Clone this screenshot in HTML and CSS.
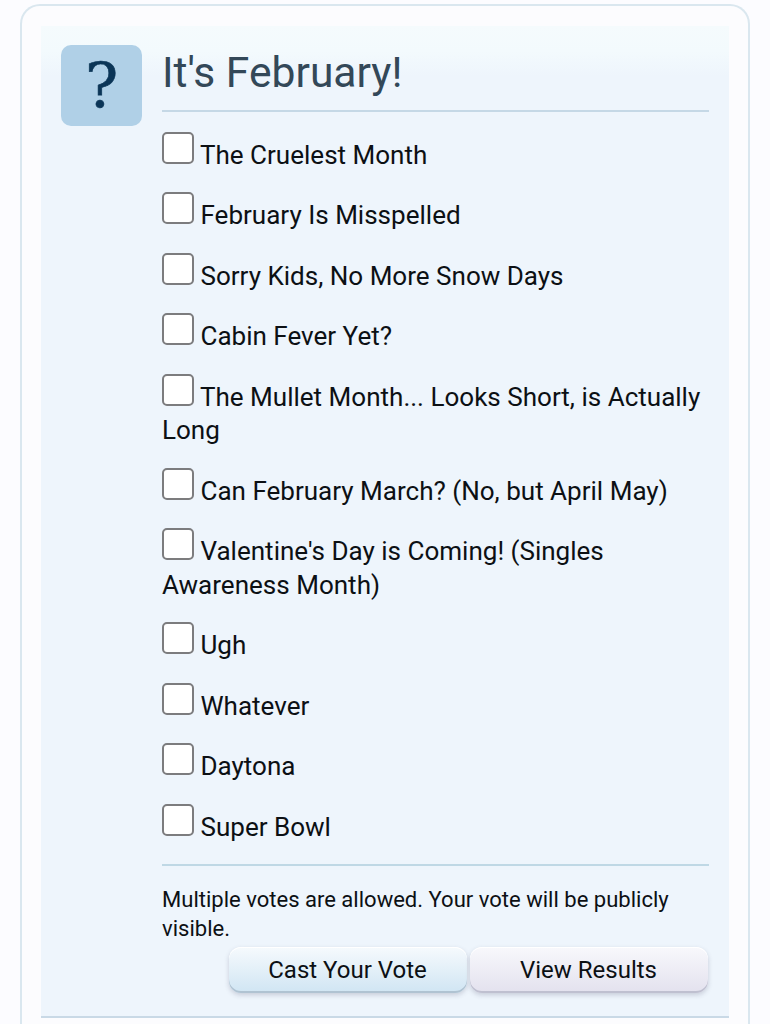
FILE: index.html
```
<!DOCTYPE html>
<html lang="en">
<head>
    <meta charset="UTF-8">
    <meta name="viewport" content="width=device-width, initial-scale=1.0">
    <title>It's February!</title>
    <link rel="stylesheet" href="styles.css">
</head>
<body>

<div class="container">
    <form class="poll" action="#">
        <div class="poll-icon"><span>?</span></div>
        <div class="poll-body">
            <h2>It's February!</h2>
            <ul class="poll-options">
                <li><label><input type="checkbox"> The Cruelest Month</label></li>
                <li><label><input type="checkbox"> February Is Misspelled</label></li>
                <li><label><input type="checkbox"> Sorry Kids, No More Snow Days</label></li>
                <li><label><input type="checkbox"> Cabin Fever Yet?</label></li>
                <li><label><input type="checkbox"> The Mullet Month... Looks Short, is Actually Long</label></li>
                <li><label><input type="checkbox"> Can February March? (No, but April May)</label></li>
                <li><label><input type="checkbox"> Valentine's Day is Coming! (Singles Awareness Month)</label></li>
                <li><label><input type="checkbox"> Ugh</label></li>
                <li><label><input type="checkbox"> Whatever</label></li>
                <li><label><input type="checkbox"> Daytona</label></li>
                <li><label><input type="checkbox"> Super Bowl</label></li>
            </ul>
            <div class="poll-footer">
                <p>Multiple votes are allowed. Your vote will be publicly visible.</p>
                <div class="poll-buttons">
                    <button type="submit" class="primary">Cast Your Vote</button>
                    <button type="button">View Results</button>
                </div>
            </div>
        </div>
    </form>
</div>

</body>
</html>
```
FILE: styles.css
```
* {
    box-sizing: border-box;
}

body {
    font-family: Roboto, "Liberation Sans", sans-serif;
    background-color: #fcfcff;
    color: #0c1014;
    margin: 0;
    padding: 4px 20px 0;
    height: 1024px;
    overflow: hidden;
}

.container {
    height: 1020px;
    padding: 20px 19px 0;
    border: 2px solid #dae7ef;
    border-bottom: none;
    border-radius: 20px 20px 0 0;
    background-color: #fcfcfe;
}

.poll {
    display: flex;
    gap: 20px;
    height: 992px;
    padding: 19px 20px 0;
    background: linear-gradient(#f5fbfd 0, #f3fafd 25px, #eef5fc 50px, #eef5fc);
    border-bottom: 2px solid #c9d9e6;
}

.poll-icon {
    flex: none;
    display: flex;
    justify-content: center;
    width: 81px;
    height: 81px;
    border-radius: 10px;
    background-color: #b0d0e7;
    color: #0b3557;
    font-family: "DejaVu Serif", serif;
    font-size: 62px;
    line-height: 81px;
    -webkit-text-stroke: 0.6px #0b3557;
}

.poll-body {
    flex: 1;
    min-width: 0;
}

h2 {
    height: 67px;
    margin: 0;
    border-bottom: 2px solid #c5d8e6;
    color: #334858;
    font-size: 42.6px;
    font-weight: normal;
    line-height: 55px;
}

.poll-options {
    margin: 0;
    padding: 19.6px 0 0;
    list-style: none;
    font-size: 26.04px;
    line-height: 33.4px;
}

.poll-options li {
    margin-bottom: 20.15px;
}

.poll-options li:last-child {
    margin-bottom: 0;
    padding-bottom: 20px;
}

input[type="checkbox"] {
    appearance: none;
    width: 32px;
    height: 32px;
    margin: 0;
    border: 2px solid #7c7c7e;
    border-radius: 5px;
    background-color: #fff;
    vertical-align: baseline;
}

.poll-footer {
    padding-top: 20px;
    border-top: 2px solid #bfd8e5;
}

.poll-footer p {
    margin: 0;
    font-size: 22.04px;
    line-height: 28.5px;
}

.poll-buttons {
    display: flex;
    justify-content: flex-end;
    gap: 3px;
    margin: 4px 1.5px 0 0;
}

button {
    width: 238px;
    height: 46px;
    padding: 0;
    border: none;
    border-radius: 12px;
    background: linear-gradient(#f8f8fc, #e3e1ee);
    box-shadow: 0 2px 5px rgba(60, 60, 90, 0.22), inset 0 -2px 0 #bfc0d0, inset 0 1px 0 #fff;
    color: #0c1014;
    font-family: inherit;
    font-size: 24px;
    cursor: pointer;
}

button.primary {
    background: linear-gradient(#f6fafd, #d0e5f3);
    box-shadow: 0 2px 5px rgba(60, 60, 90, 0.22), inset 0 -2px 0 #b0c3d2, inset 0 1px 0 #fff;
}
```
